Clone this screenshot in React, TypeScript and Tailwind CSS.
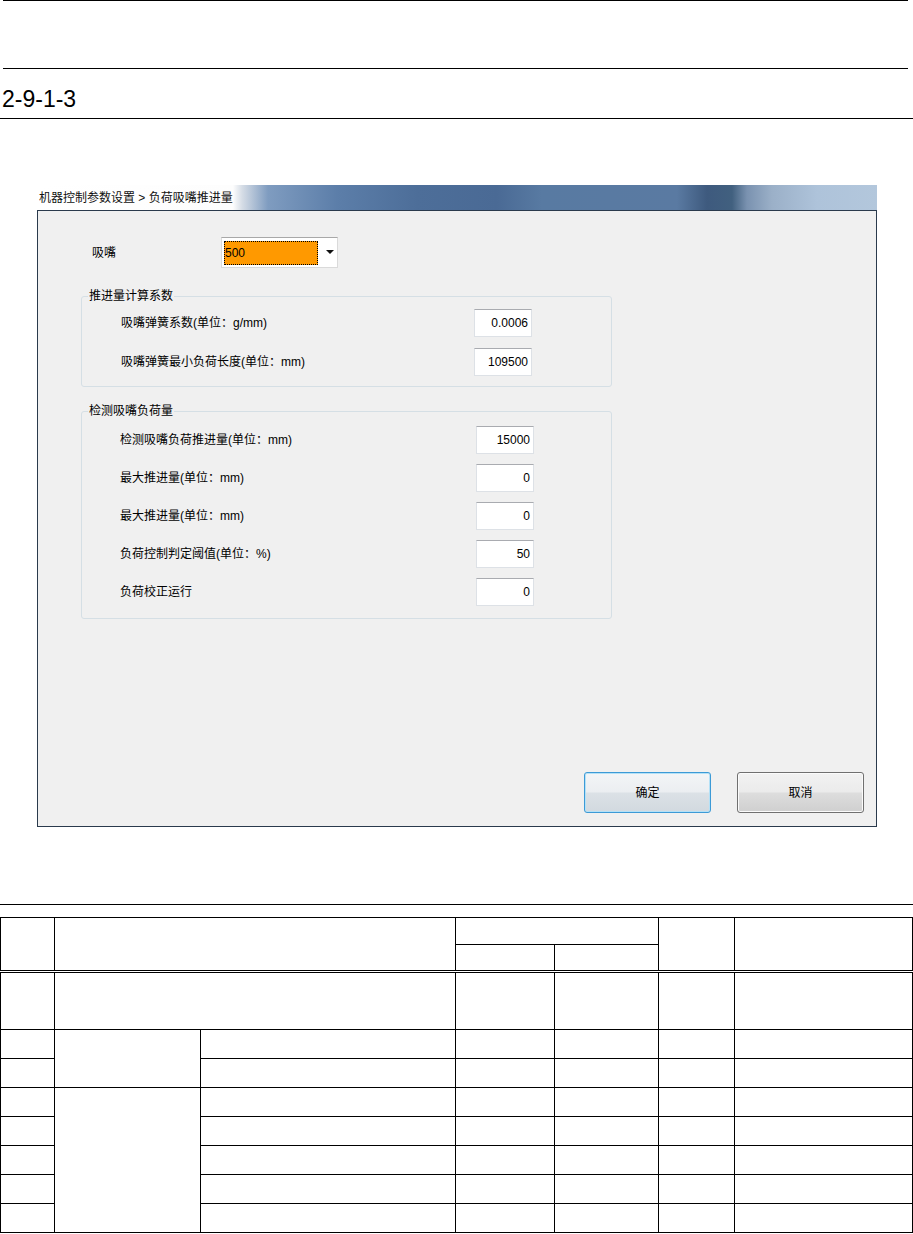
import type { ReactNode } from "react";

type Row = { label: string; value: string };

const COEF_ROWS: Row[] = [
  { label: "吸嘴弹簧系数(单位：g/mm)", value: "0.0006" },
  { label: "吸嘴弹簧最小负荷长度(单位：mm)", value: "109500" },
];

const LOAD_ROWS: Row[] = [
  { label: "检测吸嘴负荷推进量(单位：mm)", value: "15000" },
  { label: "最大推进量(单位：mm)", value: "0" },
  { label: "最大推进量(单位：mm)", value: "0" },
  { label: "负荷控制判定阈值(单位：%)", value: "50" },
  { label: "负荷校正运行", value: "0" },
];

// table cells: every line is a 1px black rule
const CELL = "border border-black p-0";
const DOUBLE_TOP = "border border-black p-0 border-t-[3px] [border-top-style:double]";

function NumBox({ value }: { value: string }) {
  return (
    <div className="flex h-[28px] w-[58px] items-center justify-end border border-[#dde1e6] border-t-[#a9abb0] bg-white pr-[3px] text-[12px] text-black">
      {value}
    </div>
  );
}

function GroupBox({ title, children }: { title: string; children: ReactNode }) {
  return (
    <div className="relative ml-[43px] w-[531px] rounded-[3px] border border-[#d5dfe5]">
      {/* legend sits across the top border like a Win7 group box */}
      <span className="absolute -top-[9px] left-[6px] bg-[#f0f0f0] px-[1px] text-[12px] leading-[16px] text-black">
        {title}
      </span>
      {children}
    </div>
  );
}

function DialogButton({ label, focused }: { label: string; focused?: boolean }) {
  return (
    <button
      className={
        focused
          ? "flex h-[41px] w-[127px] items-center justify-center rounded-[3px] border border-[#3c9ad6] bg-[linear-gradient(180deg,#f3f5f7_0%,#ebeef1_48%,#dbe1e6_52%,#d2d9df_100%)] text-[12px] text-black shadow-[inset_0_0_0_1px_#b4e1f7]"
          : "flex h-[41px] w-[127px] items-center justify-center rounded-[3px] border border-[#707070] bg-[linear-gradient(180deg,#f2f2f2_0%,#ebebeb_48%,#dddddd_52%,#cfcfcf_100%)] text-[12px] text-black shadow-[inset_0_0_0_1px_#fbfbfb]"
      }
    >
      {label}
    </button>
  );
}

function Dialog() {
  return (
    <div className="ml-[37px] mt-[66px] w-[840px]">
      {/* Aero title bar, blurred desktop behind it */}
      <div className="flex h-[25px] items-center bg-[linear-gradient(90deg,#ffffff_0px,#fdfdfd_196px,#d6dde6_205px,#7f9cc0_231px,#5c7ea9_300px,#4d6e99_380px,#4a6a95_460px,#587aa2_505px,#5a7aa2_640px,#3e5a7e_670px,#41607f_695px,#7a92b0_710px,#9bb0c8_735px,#aec3da_780px,#b3c7dc_840px)] pl-[2px] text-[12px] text-[#111]">
        机器控制参数设置 &gt; 负荷吸嘴推进量
      </div>

      <div className="flex h-[617px] flex-col border border-[#2a3a4c] bg-[#f0f0f0]">
        <div className="mt-[26px] flex h-[31px] items-center pl-[54px]">
          <span className="w-[129px] text-[12px] text-black">吸嘴</span>
          <div className="flex h-[31px] w-[117px] items-center border border-[#dadada] border-t-[#a8a8a8] bg-white pl-[2px]">
            <div className="flex h-[24px] w-[94px] items-center border border-dotted border-black bg-[#ff9900] text-[12px] text-black">
              500
            </div>
            <svg width="8" height="5" viewBox="0 0 8 5" className="ml-[8px]">
              <path d="M0 0H8L4 4Z" fill="#111" />
            </svg>
          </div>
        </div>

        <div className="mt-[28px]">
          <GroupBox title="推进量计算系数">
            <div className="flex flex-col gap-[11px] pb-[10px] pl-[39px] pt-[12px]">
              {COEF_ROWS.map((r) => (
                <div key={r.label} className="flex items-center">
                  <span className="w-[353px] text-[12px] text-black">{r.label}</span>
                  <NumBox value={r.value} />
                </div>
              ))}
            </div>
          </GroupBox>
        </div>

        <div className="mt-[24px]">
          <GroupBox title="检测吸嘴负荷量">
            <div className="flex flex-col gap-[10px] pb-[12px] pl-[38px] pt-[14px]">
              {LOAD_ROWS.map((r, i) => (
                <div key={i} className="flex items-center">
                  <span className="w-[356px] text-[12px] text-black">{r.label}</span>
                  <NumBox value={r.value} />
                </div>
              ))}
            </div>
          </GroupBox>
        </div>

        <div className="mt-auto flex justify-end gap-[26px] pb-[13px] pr-[12px]">
          <DialogButton label="确定" focused />
          <DialogButton label="取消" />
        </div>
      </div>
    </div>
  );
}

function ParamTable() {
  const lower = [0, 1, 2, 3, 4, 5, 6];
  return (
    <table className="mt-[12px] w-[912px] table-fixed border-collapse">
      <colgroup>
        <col className="w-[54px]" />
        <col className="w-[146px]" />
        <col className="w-[255px]" />
        <col className="w-[99px]" />
        <col className="w-[104px]" />
        <col className="w-[76px]" />
        <col className="w-[178px]" />
      </colgroup>
      <tbody>
        <tr className="h-[27px]">
          <td rowSpan={2} className={CELL} />
          <td rowSpan={2} colSpan={2} className={CELL} />
          <td colSpan={2} className={CELL} />
          <td rowSpan={2} className={CELL} />
          <td rowSpan={2} className={CELL} />
        </tr>
        <tr className="h-[27px]">
          <td className={CELL} />
          <td className={CELL} />
        </tr>
        <tr className="h-[58px]">
          <td className={DOUBLE_TOP} />
          <td colSpan={2} className={DOUBLE_TOP} />
          <td className={DOUBLE_TOP} />
          <td className={DOUBLE_TOP} />
          <td className={DOUBLE_TOP} />
          <td className={DOUBLE_TOP} />
        </tr>
        {lower.map((i) => (
          <tr key={i} className="h-[29px]">
            <td className={CELL} />
            {i === 0 && <td rowSpan={2} className={CELL} />}
            {i === 2 && <td rowSpan={5} className={CELL} />}
            <td className={CELL} />
            <td className={CELL} />
            <td className={CELL} />
            <td className={CELL} />
            <td className={CELL} />
          </tr>
        ))}
      </tbody>
    </table>
  );
}

export default function App() {
  return (
    <div className="h-[1234px] w-[913px] overflow-hidden bg-white font-['Liberation_Sans','Noto_Sans_CJK_SC',sans-serif]">
      <div className="ml-[3px] mr-[5px] h-[69px] border-y border-black" />
      <div className="h-[50px] border-b border-black pl-[2px] pt-[19px] text-[23px] leading-none text-black">
        2-9-1-3
      </div>

      <Dialog />

      <div className="mt-[77px] border-t border-black" />
      <ParamTable />
    </div>
  );
}
